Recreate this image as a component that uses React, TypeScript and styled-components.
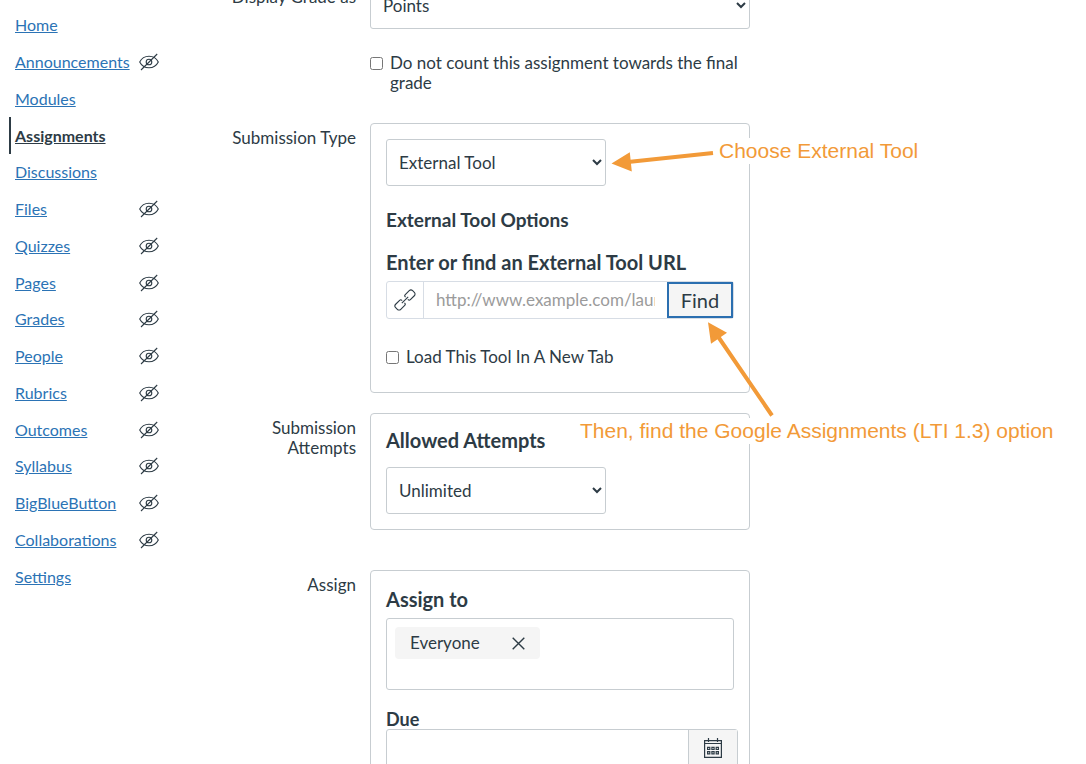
import React from "react";
import styled, { createGlobalStyle } from "styled-components";

const ink = "#2d3b45";
const line = "#c7cdd1";
const link = "#2b73b5";
const orange = "#f29a38";

const GlobalStyle = createGlobalStyle`
  *, *::before, *::after { box-sizing: border-box; }
  body {
    margin: 0;
    background: #fff;
    color: ${ink};
    font-family: Lato, "Liberation Sans", sans-serif;
    font-size: 17px;
    line-height: 20px;
  }
  button, input, select { font: inherit; color: inherit; }
`;

const Page = styled.div`
  display: flex;
  align-items: flex-start;
  height: 100vh;
  overflow: hidden;
`;

const SideNav = styled.nav`
  flex: 0 0 216px;
  padding: 7px 0 0 9px;
`;

const NavList = styled.ul`
  display: grid;
  grid-auto-rows: 1fr;
  min-height: 588px;
  margin: 0;
  padding: 0;
  list-style: none;
`;

const NavItem = styled.li<{ $active?: boolean }>`
  display: flex;
  align-items: center;
  justify-content: space-between;
  width: 150px;
  padding-left: 4px;
  border-left: 2px solid ${(p) => (p.$active ? ink : "transparent")};
`;

const NavLink = styled.a<{ $active?: boolean }>`
  color: ${(p) => (p.$active ? ink : link)};
  font-size: 16px;
  font-weight: ${(p) => (p.$active ? 700 : 400)};
  text-decoration: underline;
`;

const Form = styled.form`
  flex: 1;
  min-width: 0;
  margin-top: -18px;
`;

const FormRow = styled.div<{ $gap: number }>`
  display: grid;
  grid-template-columns: 140px minmax(0, 380px);
  column-gap: 14px;
  align-items: start;
  margin-bottom: ${(p) => p.$gap}px;
`;

const RowLabel = styled.label`
  padding-top: 5px;
  text-align: right;
`;

const Select = styled.select<{ $wide?: boolean }>`
  display: block;
  width: ${(p) => (p.$wide ? "100%" : "220px")};
  height: 47px;
  padding: 0 0 0 8px;
  border: 1px solid ${line};
  border-radius: 3px;
  background: #fff;
`;

const Panel = styled.section`
  position: relative;
  padding: 15px;
  border: 1px solid ${line};
  border-radius: 4px;
`;

const CheckLabel = styled.label`
  display: flex;
  align-items: flex-start;
  gap: 7px;
`;

const Checkbox = styled.input`
  flex: none;
  width: 13px;
  height: 13px;
  margin: 4px 0 0;
`;

const GradeOption = styled.div`
  margin-top: 24px;
`;

const SubTitle = styled.h3`
  margin: 24px 0 21px;
  font-size: 19px;
  line-height: 20px;
`;

const FieldTitle = styled.label<{ $gap: number }>`
  display: block;
  margin-bottom: ${(p) => p.$gap}px;
  font-size: 20px;
  font-weight: 700;
  line-height: 22px;
`;

const AssignField = styled.div`
  padding-top: 2px;
`;

const UrlGroup = styled.div`
  display: flex;
  height: 38px;
  margin-bottom: 28px;
  border: 1px solid #d7dde5;
  border-radius: 3px;
`;

const UrlIcon = styled.span`
  display: grid;
  flex: 0 0 37px;
  place-items: center;
  border-right: 1px solid #d7dde5;
`;

const UrlInput = styled.input`
  flex: 1;
  min-width: 0;
  padding: 0 12px;
  border: 0;
  background: transparent;
  &::placeholder { color: #9b9b9b; opacity: 1; }
`;

const FindButton = styled.button`
  flex: 0 0 66px;
  padding: 0;
  border: 2px solid #2b6fb0;
  background: #f5f5f5;
  font-size: 20px;
`;

const NewTab = styled.div`
  padding-bottom: 10px;
`;

const AssigneeBox = styled.div`
  min-height: 72px;
  margin-bottom: 19px;
  padding: 8px;
  border: 1px solid ${line};
  border-radius: 3px;
`;

const Token = styled.span`
  display: inline-flex;
  align-items: center;
  gap: 32px;
  height: 32px;
  padding: 0 15px;
  border-radius: 4px;
  background: #f5f5f5;
`;

const TokenRemove = styled.button`
  display: grid;
  padding: 0;
  border: 0;
  background: none;
`;

const DueLabel = styled.label`
  display: block;
  font-size: 18px;
  font-weight: 700;
`;

const DateGroup = styled.div`
  display: flex;
  height: 38px;
  margin-right: -4px;
  border: 1px solid ${line};
  border-radius: 3px;
`;

const DateInput = styled.input`
  flex: 1;
  min-width: 0;
  padding: 0 12px;
  border: 0;
  background: transparent;
`;

const DateButton = styled.button`
  display: grid;
  flex: 0 0 49px;
  place-items: center;
  padding: 0;
  border: 0;
  border-left: 1px solid ${line};
  background: #f5f5f5;
`;

const Note = styled.p<{ $left: number; $top: number }>`
  position: absolute;
  z-index: 1;
  top: ${(p) => p.$top}px;
  left: ${(p) => p.$left}px;
  margin: 0;
  background: #fff;
  color: ${orange};
  font-family: "Liberation Sans", Arial, sans-serif;
  font-size: 21px;
  line-height: 26px;
  white-space: nowrap;
`;

const Arrows = styled.svg`
  position: absolute;
  z-index: 2;
  top: 0;
  left: 200px;
  overflow: visible;
  pointer-events: none;
`;

const HiddenIcon = () => (
  <svg width="20" height="18" viewBox="0 0 20 18" fill="none" stroke={ink} strokeWidth="1.1" role="img" aria-label="Hidden from students">
    <path d="M.7 9C2.6 5.2 6 3.2 10 3.2S17.4 5.2 19.3 9C17.4 12.8 14 14.8 10 14.8S2.6 12.8.7 9Z" />
    <circle cx="10" cy="9" r="2.8" />
    <path d="M2 17 18.2 1" />
  </svg>
);

const ChainIcon = () => (
  <svg width="22" height="22" viewBox="0 0 22 22" fill="none" stroke={ink} strokeWidth="1.1" aria-hidden="true">
    <g transform="rotate(-45 11 11)">
      <path d="M8.6 9.4V9a1.6 1.6 0 0 0-1.600-1.600H1.400A2.400 2.400 0 0 0-1 9.800v2.400a2.400 2.400 0 0 0 2.400 2.400H7A1.600 1.600 0 0 0 8.600 13v-.4" />
      <path d="M13.4 9.400V9a1.600 1.600 0 0 1 1.600-1.600h5.600A2.400 2.400 0 0 1 23 9.800v2.400a2.400 2.400 0 0 1-2.400 2.400H15a1.600 1.600 0 0 1-1.600-1.600v-.4" />
      <path d="M6.500 11h9" />
    </g>
  </svg>
);

const CloseIcon = () => (
  <svg width="13" height="13" viewBox="0 0 13 13" stroke={ink} strokeWidth="1.4" aria-hidden="true">
    <path d="m.7.7 11.6 11.6M12.3.7.7 12.3" />
  </svg>
);

const CalendarIcon = () => (
  <svg width="18" height="20" viewBox="0 0 18 20" fill="none" stroke={ink} strokeWidth="1.2" aria-hidden="true">
    <path d="M.6 2.6h16.8v16.8H.6ZM.6 5.5h16.8M4.5 0v4M13.5 0v4" />
    <path d="M3.6 9.3h2.2v2.2H3.6zM7.9 9.3h2.2v2.2H7.9zM12.2 9.3h2.2v2.2h-2.2zM3.6 13.6h2.2v2.2H3.6zM7.9 13.6h2.2v2.2H7.9zM12.2 13.6h2.2v2.2h-2.2z" />
  </svg>
);

type Entry = { name: string; hidden?: boolean; active?: boolean };

const entries: Entry[] = [
  { name: "Home" },
  { name: "Announcements", hidden: true },
  { name: "Modules" },
  { name: "Assignments", active: true },
  { name: "Discussions" },
  { name: "Files", hidden: true },
  { name: "Quizzes", hidden: true },
  { name: "Pages", hidden: true },
  { name: "Grades", hidden: true },
  { name: "People", hidden: true },
  { name: "Rubrics", hidden: true },
  { name: "Outcomes", hidden: true },
  { name: "Syllabus", hidden: true },
  { name: "BigBlueButton", hidden: true },
  { name: "Collaborations", hidden: true },
  { name: "Settings" },
];

export default function App() {
  return (
    <Page>
      <GlobalStyle />
      <SideNav aria-label="Course">
        <NavList>
          {entries.map((e) => (
            <NavItem key={e.name} $active={e.active}>
              <NavLink href="#" $active={e.active} aria-current={e.active ? "page" : undefined}>
                {e.name}
              </NavLink>
              {e.hidden && <HiddenIcon />}
            </NavItem>
          ))}
        </NavList>
      </SideNav>

      <Form>
        <FormRow $gap={30}>
          <RowLabel htmlFor="grade-as">Display Grade as</RowLabel>
          <div>
            <Select id="grade-as" $wide>
              <option>Points</option>
            </Select>
            <GradeOption>
              <CheckLabel>
                <Checkbox type="checkbox" />
                <span>Do not count this assignment towards the final grade</span>
              </CheckLabel>
            </GradeOption>
          </div>
        </FormRow>

        <FormRow $gap={20}>
          <RowLabel htmlFor="submission-type">Submission Type</RowLabel>
          <Panel>
            <Select id="submission-type">
              <option>External Tool</option>
            </Select>
            <SubTitle>External Tool Options</SubTitle>
            <FieldTitle htmlFor="tool-url" $gap={8}>
              Enter or find an External Tool URL
            </FieldTitle>
            <UrlGroup>
              <UrlIcon>
                <ChainIcon />
              </UrlIcon>
              <UrlInput id="tool-url" type="text" placeholder="http://www.example.com/launch" />
              <FindButton type="button">Find</FindButton>
            </UrlGroup>
            <NewTab>
              <CheckLabel>
                <Checkbox type="checkbox" />
                <span>Load This Tool In A New Tab</span>
              </CheckLabel>
            </NewTab>
            <Note $left={348} $top={14}>Choose External Tool</Note>
            <Note $left={209} $top={294}>Then, find the Google Assignments (LTI 1.3) option</Note>
            <Arrows width="210" height="300" viewBox="571 124 210 300" aria-hidden="true">
              <g fill={orange} stroke={orange}>
                <path d="M713 153 628 162M772 415.5 717 335" fill="none" strokeWidth="4" />
                <path d="m611.5 163.5 18.3-11.3 2 19.2ZM708 322.3l19 10.5-16 11Z" stroke="none" />
              </g>
            </Arrows>
          </Panel>
        </FormRow>

        <FormRow $gap={40}>
          <RowLabel as="div">Submission Attempts</RowLabel>
          <Panel>
            <FieldTitle htmlFor="attempts" $gap={16}>Allowed Attempts</FieldTitle>
            <Select id="attempts">
              <option>Unlimited</option>
            </Select>
          </Panel>
        </FormRow>

        <FormRow $gap={40}>
          <RowLabel as="div">Assign</RowLabel>
          <Panel>
            <AssignField>
              <FieldTitle as="div" $gap={8}>Assign to</FieldTitle>
            </AssignField>
            <AssigneeBox>
              <Token>
                Everyone
                <TokenRemove type="button" aria-label="Remove Everyone">
                  <CloseIcon />
                </TokenRemove>
              </Token>
            </AssigneeBox>
            <DueLabel htmlFor="due">Due</DueLabel>
            <DateGroup>
              <DateInput id="due" type="text" />
              <DateButton type="button" aria-label="Choose due date">
                <CalendarIcon />
              </DateButton>
            </DateGroup>
          </Panel>
        </FormRow>
      </Form>
    </Page>
  );
}
